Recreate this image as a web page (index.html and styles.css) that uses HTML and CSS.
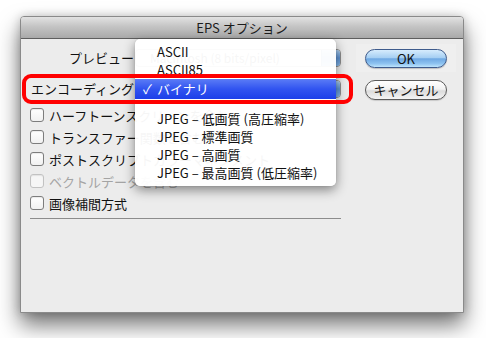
FILE: index.html
```html
<!DOCTYPE html>
<html lang="ja">
<head>
<meta charset="utf-8">
<title>EPS オプション</title>
<link rel="stylesheet" href="styles.css">
</head>
<body>
<div class="window">
  <div class="titlebar">EPS オプション</div>
  <div class="content">
    <div class="left">
      <div class="form">
        <div class="label">プレビュー</div>
        <div class="popup"><span class="popup-text">Macintosh (8 bits/pixel)</span><span class="cap"></span></div>
        <div class="label">エンコーディング</div>
        <div class="popup"><span class="popup-text">バイナリ</span><span class="cap"></span></div>
      </div>
      <div class="checks">
        <label class="check"><span class="box"></span>ハーフトーンスクリーンを含む</label>
        <label class="check"><span class="box"></span>トランスファー関数を含む</label>
        <label class="check"><span class="box"></span>ポストスクリプトカラーマネジメント</label>
        <label class="check disabled"><span class="box"></span>ベクトルデータを含む</label>
        <label class="check"><span class="box"></span>画像補間方式</label>
      </div>
      <div class="rule"></div>
    </div>
    <div class="buttons">
      <div class="focus-ring"><div class="btn ok">OK</div></div>
      <div class="btn cancel">キャンセル</div>
    </div>
  </div>

  <div class="menu">
    <div class="item">ASCII</div>
    <div class="item">ASCII85</div>
    <div class="item selected"><span class="tick">✓</span>バイナリ</div>
    <div class="sep"></div>
    <div class="item">JPEG – 低画質 (高圧縮率)</div>
    <div class="item">JPEG – 標準画質</div>
    <div class="item">JPEG – 高画質</div>
    <div class="item">JPEG – 最高画質 (低圧縮率)</div>
  </div>
  <div class="highlight-box"></div>
</div>
</body>
</html>
```

FILE: styles.css
```css
html, body {
  margin: 0;
  padding: 0;
  background: #ffffff;
}
body {
  width: 486px;
  height: 338px;
  overflow: hidden;
  padding: 16px 0 0 20px;
  box-sizing: border-box;
  font-family: "Noto Sans CJK JP", "DejaVu Sans", sans-serif;
  font-size: 13px;
  color: #111;
}
.window {
  position: relative;
  width: 444px;
  height: 297px;
  box-sizing: border-box;
  border: 1px solid #8a8a8a;
  border-radius: 4px 4px 0 0;
  background: #ececec;
  box-shadow: 0 12px 22px rgba(0, 0, 0, 0.55), 0 0 10px rgba(0, 0, 0, 0.18);
}
.titlebar {
  height: 21px;
  border-bottom: 1px solid #5e5e5e;
  border-radius: 3px 3px 0 0;
  background: linear-gradient(#e2e2e2, #c4c4c4 45%, #a9a9a9);
  text-align: center;
  line-height: 21px;
  font-size: 13px;
  color: #1c1c1c;
}
.content {
  display: flex;
  padding: 9px 0 0 9px;
}
.left {
  width: 335px;
  display: flex;
  flex-direction: column;
}
.form {
  display: grid;
  grid-template-columns: 104px 206px;
  column-gap: 1px;
  row-gap: 11px;
  grid-auto-rows: 20px;
}
.label {
  text-align: right;
  white-space: nowrap;
  line-height: 20px;
}
.popup {
  position: relative;
  height: 18px;
  margin-top: 1px;
  border: 1px solid #8d8d8d;
  border-radius: 4px;
  background: linear-gradient(#ffffff, #eeeeee);
  box-sizing: border-box;
  line-height: 16px;
  padding-left: 14px;
  font-size: 12px;
  color: #222;
  overflow: hidden;
}
.cap {
  position: absolute;
  right: 0;
  top: 0;
  bottom: 0;
  width: 18px;
  background: linear-gradient(#a9cdf0, #5d93d4 50%, #82b6ea);
  border-left: 1px solid #4c77aa;
}
.checks {
  display: flex;
  flex-direction: column;
  margin-top: 5px;
}
.check {
  display: flex;
  align-items: center;
  height: 22px;
  white-space: nowrap;
  gap: 5px;
}
.box {
  width: 12px;
  height: 12px;
  border: 1px solid #7d7d7d;
  border-radius: 3px;
  background: linear-gradient(#ffffff, #f1f1f1);
  flex: none;
  box-shadow: inset 0 1px 1px rgba(0,0,0,0.08);
}
.check.disabled {
  color: #a4a4a4;
}
.check.disabled .box {
  border-color: #c2c2c2;
  background: #f6f6f6;
}
.rule {
  width: 311px;
  height: 1px;
  margin-top: 4px;
  background: #8c8c8c;
}
.buttons {
  display: flex;
  flex-direction: column;
  width: 82px;
}
.focus-ring {
  margin: -4px -9px 0 -9px;
  padding: 4px 9px 4px 9px;
  background: #efefef;
}
.btn {
  height: 19px;
  border-radius: 10px;
  box-sizing: border-box;
  text-align: center;
  line-height: 17px;
  font-size: 13px;
  color: #111;
}
.ok {
  margin-top: 1px;
  border: 1px solid #3e5b8c;
  background: linear-gradient(#d6ecfd, #a6cff3 45%, #6fa8e3 52%, #8ec3f0 80%, #bde4fd);
  box-shadow: 0 1px 1px rgba(0,0,0,0.2);
}
.cancel {
  margin-top: 8px;
  height: 20px;
  border: 1px solid #5a5a5a;
  background: linear-gradient(#ffffff, #f2f2f2 45%, #dcdcdc 55%, #f4f4f4);
  box-shadow: 0 1px 1px rgba(0,0,0,0.15);
}
.menu {
  position: absolute;
  left: 114px;
  top: 22px;
  width: 201px;
  box-sizing: border-box;
  padding: 4px 0;
  background: rgba(255, 255, 255, 0.96);
  border-radius: 5px;
  box-shadow: 0 4px 12px rgba(0, 0, 0, 0.45), 0 0 1px rgba(0,0,0,0.3);
  z-index: 5;
}
.item {
  position: relative;
  height: 18px;
  line-height: 18px;
  padding-left: 22px;
  white-space: nowrap;
  color: #111;
}
.item.selected {
  height: 20px;
  line-height: 20px;
  color: #fff;
  background: linear-gradient(#5b7cf6, #3154f0 50%, #1c3fe9);
}
.tick {
  position: absolute;
  left: 8px;
  top: 0;
}
.sep {
  height: 11px;
}
.highlight-box {
  position: absolute;
  left: 1px;
  top: 57px;
  width: 331px;
  height: 30px;
  box-sizing: border-box;
  border: 4px solid #ff0000;
  border-radius: 9px;
  z-index: 6;
}
```
